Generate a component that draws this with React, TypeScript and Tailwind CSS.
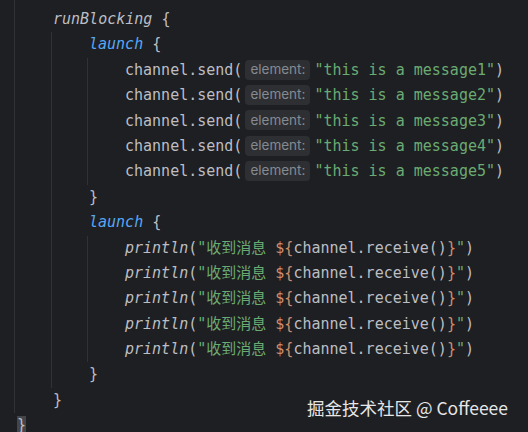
import type { ReactNode } from 'react';

const mono = "font-['DejaVu_Sans_Mono','Noto_Sans_CJK_SC',monospace]";

function Line({ indent = 0, children }: { indent?: number; children: ReactNode }) {
  const pad = indent === 0 ? 'pl-0' : 'pl-[36px]';
  return <div className={`h-[25.4px] leading-[25.4px] whitespace-pre ${pad}`}>{children}</div>;
}

function Block({ children, top = false }: { children: ReactNode; top?: boolean }) {
  return (
    <div className={top ? 'border-l border-[#303236] pl-[2px] pt-[7px]' : 'ml-[34px] border-l border-[#303236] pl-[1px]'}>
      {children}
    </div>
  );
}

function Hint() {
  return (
    <span className="inline-flex items-center h-[20px] ml-[3px] mr-[4px] px-[5px] rounded-[4px] bg-[#2d2f33] text-[#868a91] text-[13.5px] font-['Inter',sans-serif] align-[1px] leading-none">
      element:
    </span>
  );
}

const sends = [1, 2, 3, 4, 5];

export default function App() {
  return (
    <div className={`relative w-[528px] h-[432px] overflow-hidden bg-[#1e1f22] text-[#bcbec4] text-[15px] ${mono}`}>
      <div className="pl-[14px]">
        <Block top>
          <Line indent={1}>
            <span className="italic">runBlocking</span> {'{'}
          </Line>
          <Block>
            <Line indent={1}>
              <span className="italic text-[#56a8f5]">launch</span> {'{'}
            </Line>
            <Block>
              {sends.map((n) => (
                <Line key={n} indent={1}>
                  channel.send(<Hint />
                  <span className="text-[#6aab73]">"this is a message{n}"</span>)
                </Line>
              ))}
            </Block>
            <Line indent={1}>{'}'}</Line>
            <Line indent={1}>
              <span className="italic text-[#56a8f5]">launch</span> {'{'}
            </Line>
            <Block>
              {sends.map((n) => (
                <Line key={n} indent={1}>
                  <span className="italic">println</span>(
                  <span className="text-[#6aab73]">"收到消息 </span>
                  <span className="text-[#cf8e6d]">{'${'}</span>channel.receive()
                  <span className="text-[#cf8e6d]">{'}'}</span>
                  <span className="text-[#6aab73]">"</span>)
                </Line>
              ))}
            </Block>
            <Line indent={1}>{'}'}</Line>
          </Block>
          <Line indent={1}>{'}'}</Line>
        </Block>
        <div className="pl-[3px]">
          <Line>
            <span className="bg-[#43454a]">{'}'}</span>
          </Line>
        </div>
      </div>

      {/* watermark */}
      <div className="absolute left-[307px] top-[396px] text-[17.5px] leading-[24px] text-[#e6e6e6] font-['Noto_Sans_CJK_SC','Noto_Sans',sans-serif] whitespace-nowrap">
        掘金技术社区 @ Coffeeee
      </div>
    </div>
  );
}
